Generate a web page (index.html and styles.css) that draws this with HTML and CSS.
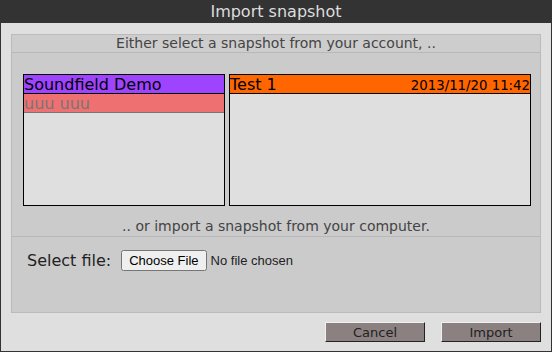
FILE: index.html
```html
<!DOCTYPE html>
<html lang="en">
<head>
    <meta charset="UTF-8">
    <title>Import snapshot</title>
    <link rel="stylesheet" href="styles.css">
</head>
<body>
    <div class="dialog">
        <div class="dialog-title">Import snapshot</div>
        <div class="dialog-body">
            <div class="import-panel">
                <div class="section-head">Either select a snapshot from your account, ..</div>
                <div class="lists">
                    <!-- projects -->
                    <div class="list project-list">
                        <div class="row row-selected">Soundfield Demo</div>
                        <div class="row row-item">uuu uuu</div>
                    </div>
                    <!-- snapshots -->
                    <div class="list snapshot-list">
                        <div class="row row-snapshot">
                            <span>Test 1</span>
                            <span class="date">2013/11/20 11:42</span>
                        </div>
                    </div>
                </div>
                <div class="section-head section-bottom">.. or import a snapshot from your computer.</div>
                <div class="file-row">
                    <label for="file">Select file:</label>
                    <input type="file" id="file">
                </div>
            </div>
            <div class="actions">
                <button class="btn">Cancel</button>
                <button class="btn">Import</button>
            </div>
        </div>
    </div>
</body>
</html>
```

FILE: styles.css
```css
html,
body {
    margin: 0;
    padding: 0;
}

body {
    font-family: "DejaVu Sans", sans-serif;
    background-color: #dfdfdf;
}

.dialog {
    width: 552px;
    height: 352px;
    box-sizing: border-box;
    border: 1px solid #333;
    border-top: none;
    background-color: #dfdfdf;
    display: flex;
    flex-direction: column;
}

.dialog-title {
    height: 23px;
    line-height: 23px;
    margin: 0 -1px;
    background-color: #333;
    color: #ddd;
    font-size: 16px;
    text-align: center;
}

.dialog-body {
    flex: 1;
    padding: 11px 10px 0 10px;
    display: flex;
    flex-direction: column;
}

/* 가져오기 패널 */
.import-panel {
    height: 279px;
    box-sizing: border-box;
    border: 1px solid #bbb;
    background-color: #cbcbcb;
    display: flex;
    flex-direction: column;
}

.section-head {
    height: 17px;
    line-height: 17px;
    border-bottom: 1px solid #b8b8b8;
    background-color: #cdcdcd;
    color: #444;
    font-size: 14px;
    text-align: center;
}

.section-bottom {
    margin-top: 11px;
    height: 19px;
    line-height: 19px;
    background-color: #cbcbcb;
}

/* 목록 */
.lists {
    display: flex;
    gap: 4px;
    margin: 21px 9px 0 11px;
}

.list {
    height: 132px;
    box-sizing: border-box;
    border: 1px solid #000;
    background-color: #dfdfdf;
}

.project-list {
    width: 202px;
}

.snapshot-list {
    flex: 1;
}

.row {
    height: 18px;
    line-height: 19px;
    font-size: 16px;
    color: #000;
    white-space: nowrap;
    overflow: hidden;
}

.row-selected {
    background-color: #9e44ff;
    border-bottom: 1px solid #000;
}

.row-item {
    background-color: #ee7070;
    border-bottom: 1px solid #777;
    color: #777;
}

.row-snapshot {
    display: flex;
    justify-content: space-between;
    align-items: baseline;
    background-color: #ff6600;
    border-bottom: 1px solid #000;
}

.row-snapshot .date {
    font-size: 13.3px;
}

/* 파일 선택 */
.file-row {
    display: flex;
    align-items: center;
    gap: 10px;
    padding: 13px 15px;
    font-size: 16px;
    color: #222;
}

.file-row input {
    font-family: "Liberation Sans", Arial, sans-serif;
    font-size: 13px;
}

/* 버튼 */
.actions {
    display: flex;
    justify-content: flex-end;
    gap: 16px;
    margin-top: 9px;
}

.btn {
    width: 100px;
    height: 20px;
    padding: 0;
    box-sizing: border-box;
    border: 1px solid;
    border-color: #f0f0f0 #222 #222 #f0f0f0;
    background-color: #8b8181;
    color: #222;
    font-family: "DejaVu Sans", sans-serif;
    font-size: 13px;
    cursor: pointer;
}
```
